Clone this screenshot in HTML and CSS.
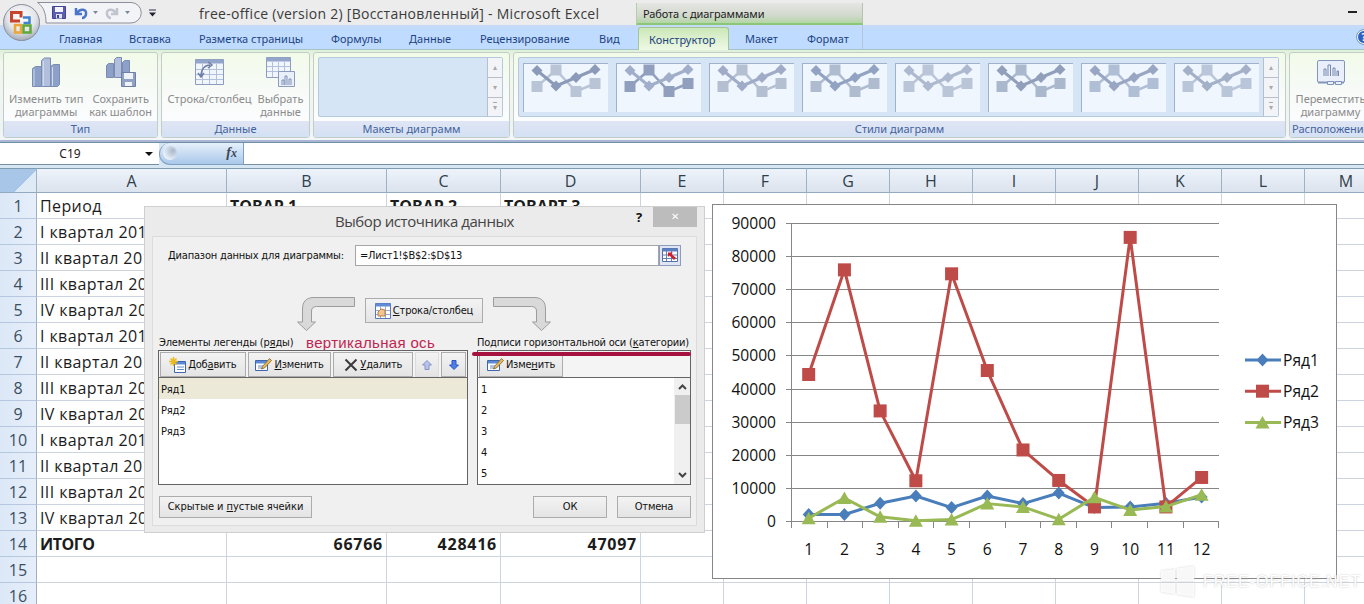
FILE: index.html
```html
<!DOCTYPE html>
<html lang="ru">
<head>
  <meta charset="UTF-8">
  <title>free-office (version 2) [Восстановленный] - Microsoft Excel</title>
  <link rel="stylesheet" href="styles.css">
</head>
<body>

  <header class="titlebar">
    <div class="quick">
      <svg width="105" height="22" viewBox="0 0 105 22">
        <path d="M.5 .5H94a10 10 0 0 1 0 20.500H9C9 12 7 5 .5 .5z" fill="#f3f4f8" stroke="#8b8f9b"/>
        <path d="M15.500 4.500h13v12h-13z" fill="#5b5fb0" stroke="#43468f"/>
        <path d="M18 5h8v5h-8z" fill="#f4f5fc"/>
        <path d="M19 12h6v4.500h-6z" fill="#dfe2f2"/>
        <path d="M20 13h2v3h-2z" fill="#43468f"/>
        <path d="M39 6v6h6M40 11c3-5 10-4 9 1 0 2-2 4-4 4" fill="none" stroke="#4a76c9" stroke-width="2.500"/>
        <path d="M56 9h5l-2.500 3zM88 9h5l-2.500 3z" fill="#7b8798"/>
        <path d="M80 6v6h-6M79 11c-3-5-10-4-9 1 0 2 2 4 4 4" fill="none" stroke="#bfc4cd" stroke-width="2.500"/>
      </svg>
      <svg width="9" height="8" viewBox="0 0 9 8"><path d="M1 1h7" stroke="#334" /><path d="M1 3.500h7l-3.500 4z" fill="#223"/></svg>
    </div>
    <div class="caption">free-office (version 2) [Восстановленный] - Microsoft Excel</div>
    <div class="context">Работа с диаграммами</div>
    <div class="minimize"></div>
  </header>

  <nav class="tabs">
    <span class="tab t-home">Главная</span>
    <span class="tab t-insert">Вставка</span>
    <span class="tab t-page">Разметка страницы</span>
    <span class="tab t-formulas">Формулы</span>
    <span class="tab t-data">Данные</span>
    <span class="tab t-review">Рецензирование</span>
    <span class="tab t-view">Вид</span>
    <span class="tab t-design active">Конструктор</span>
    <span class="tab t-layout">Макет</span>
    <span class="tab t-format">Формат</span>
    <span class="help">?</span>
  </nav>

  <svg class="orb" width="42" height="42" viewBox="0 0 42 42">
    <defs>
      <radialGradient id="orbFill" cx=".5" cy=".35" r=".65">
        <stop offset="0" stop-color="#fff"/>
        <stop offset=".6" stop-color="#e3e5ea"/>
        <stop offset="1" stop-color="#a4abb8"/>
      </radialGradient>
    </defs>
    <circle cx="20.500" cy="21.500" r="18" fill="url(#orbFill)" stroke="#868e9c"/>
    <g fill="none" stroke-width="3">
      <path d="M19 20h-8.500v-8.500h9.500v5" stroke="#c8432c"/>
      <path d="M22 16.500h6.500v5.500h-6" stroke="#3f83cf" stroke-width="2.500"/>
      <path d="M20 24h-6v7.500h6z" stroke="#eba53a" stroke-width="2.500"/>
      <path d="M22.500 24.500h7v7h-7z" stroke="#5fa83c" stroke-width="2.500"/>
    </g>
  </svg>

  <section class="ribbon">
    <div class="group g-type">
      <div class="tools">
        <div class="tool">
          <svg width="30" height="32" viewBox="0 0 30 32">
            <g stroke="#7b8cb2"><path d="M1.500 12.500l3-2h6v20h-9z" fill="#8da0c8"/><path d="M10.500 4.500l3-2.500h6v28.500h-9z" fill="#b1bfdc"/><path d="M19.500 10.500l3-2h6v20l-2 2h-7z" fill="#8da0c8"/></g>
            <path d="M3 13v17M12.500 5v25M21.500 11v19" stroke="#d0daed"/>
          </svg>
          <span>Изменить тип<br>диаграммы</span>
        </div>
        <div class="tool">
          <svg width="32" height="32" viewBox="0 0 32 32">
            <g stroke="#7b8cb2"><path d="M1.500 9.500l2-2h5v14h-7z" fill="#8da0c8"/><path d="M9.500 3.500l2-2h5v20h-7z" fill="#b1bfdc"/><path d="M17.500 6.500l2-2h5v15h-7z" fill="#8da0c8"/></g>
            <path d="M16.500 16.500h14v14h-14z" fill="#91a1c4" stroke="#6d7fa6"/>
            <path d="M19 17h9v6h-9zM20 26h7v4h-7z" fill="#eef2fa"/>
          </svg>
          <span>Сохранить<br>как шаблон</span>
        </div>
      </div>
      <div class="name">Тип</div>
    </div>

    <div class="group g-data">
      <div class="tools">
        <div class="tool">
          <svg width="32" height="32" viewBox="0 0 32 32">
            <path d="M1.500 3.500h28v25h-28z" fill="#f1f5fc" stroke="#8c9cbd"/>
            <path d="M1.500 3.500h28v4h-28z" fill="#93a5ca"/>
            <path d="M8.500 8v20M15.500 8v20M22.500 8v20M2 13.500h27M2 18.500h27M2 23.500h27" stroke="#b3c0d9"/>
            <path d="M7 20c0-7 4-11 9-11M4 17l3 4 3-4M14 6l4 3-4 3" fill="none" stroke="#6c7ea6" stroke-width="1.500"/>
          </svg>
          <span>Строка/столбец</span>
        </div>
        <div class="tool">
          <svg width="32" height="32" viewBox="0 0 32 32">
            <path d="M2.500 1.500h24v20h-24z" fill="#f1f5fc" stroke="#8c9cbd"/>
            <path d="M2.500 1.500h24v4h-24z" fill="#93a5ca"/>
            <path d="M8.500 6v15M14.500 6v15M20.500 6v15M3 10.500h23M3 15.500h23" stroke="#b3c0d9"/>
            <path d="M14.500 15.500h16v15h-16z" fill="#eaf0fa" stroke="#8c9cbd"/>
            <path d="M18 29v-5h2v5M21 29v-9h2v9M25 29v-6h2v6" fill="none" stroke="#7c8db4"/>
          </svg>
          <span>Выбрать<br>данные</span>
        </div>
      </div>
      <div class="name">Данные</div>
    </div>

    <div class="group g-layouts">
      <div class="gallery">
        <div class="thumbs"></div>
        <div class="spin"><i>▴</i><i>▾</i><i class="more">▾</i></div>
      </div>
      <div class="name">Макеты диаграмм</div>
    </div>

    <div class="group g-styles">
      <div class="gallery">
        <div class="thumbs" id="styles"></div>
        <div class="spin"><i>▴</i><i>▾</i><i class="more">▾</i></div>
      </div>
      <div class="name">Стили диаграмм</div>
    </div>

    <div class="group g-place">
      <div class="tools">
        <div class="tool">
          <svg width="32" height="32" viewBox="0 0 32 32">
            <rect x="2.500" y="4.500" width="27" height="22" rx="1.500" fill="#eaf0fb" stroke="#8394ba"/>
            <path d="M3 26.500h26" stroke="#8394ba" stroke-width="2"/>
            <path d="M9 20v-7h2v7M13 20V9h2.500v11M18 20v-8h2v8M22 20v-5h1.500v5" fill="none" stroke="#7686ae"/>
            <path d="M12.500 25.500h6v3h-6zM20.500 25.500h6v3h-6z" fill="#eaf0fb" stroke="#8394ba"/>
          </svg>
          <span>Переместить<br>диаграмму</span>
        </div>
      </div>
      <div class="name">Расположение</div>
    </div>
  </section>

  <div class="formula">
    <div class="namebox"><span>C19</span><i></i></div>
    <div class="fx"><b></b><em>f<small>x</small></em></div>
    <div class="entry"></div>
  </div>

  <main class="sheet" id="sheet"></main>

  <div class="chart">
    <svg id="chart" width="623" height="373" viewBox="713 205 623 373"></svg>
  </div>

  <div class="dialog">
    <div class="dlg-title">
      <span class="dlg-name">Выбор источника данных</span>
      <span class="dlg-help">?</span>
      <span class="dlg-close">✕</span>
    </div>
    <div class="dlg-body">
      <div class="range">
        <label><u>Д</u>иапазон данных для диаграммы:</label>
        <div class="field">=Лист1!$B$2:$D$13</div>
        <div class="pick">
          <svg width="16" height="14" viewBox="0 0 16 14">
            <path d="M.5 .5h15v13H.5z" fill="#fff" stroke="#5572a8"/>
            <path d="M.5 .5h15v3H.5z" fill="#5b7fc0"/>
            <path d="M4.500 3v10M9.500 3v10M1 7h14M1 10.500h14" stroke="#6a7fa8"/>
            <path d="M6 4.500h5l-1.500 1.500 4.500 4-2 2-4.500-4.500L6 9z" fill="#d0202c"/>
          </svg>
        </div>
      </div>

      <div class="swap">
        <svg width="58" height="35" viewBox="0 0 58 35">
          <path d="M57.500 1.500H17C8 1.500 5.500 7 5.500 13v13H.5l9 8.500 9-8.500h-4V15c0-3 2-4.500 5-4.500h38z" fill="#d9d9d9" stroke="#9c9c9c"/>
        </svg>
        <div class="btn switch">
          <svg width="16" height="16" viewBox="0 0 16 16">
            <path d="M.5 .5h15v15H.5z" fill="#fff" stroke="#5877b5"/>
            <path d="M.5 .5h15v3H.5z" fill="#5f8bd8"/>
            <path d="M5.500 3v12M10.500 3v12M1 7.500h14M1 11.500h14" stroke="#93abd6"/>
            <path d="M3 13V9l3-3 4 1v6z" fill="#f2c48f" stroke="#b77f42"/>
          </svg>
          <span><u>С</u>трока/столбец</span>
        </div>
        <svg width="58" height="35" viewBox="0 0 58 35">
          <path d="M.5 1.500H41c9 0 11.500 5.500 11.500 11.500v13h5l-9 8.500-9-8.500h4V15c0-3-2-4.500-5-4.500H.5z" fill="#d9d9d9" stroke="#9c9c9c"/>
        </svg>
      </div>

      <div class="heads">
        <span class="h-rows">Элементы легенды (р<u>я</u>ды)</span>
        <span class="note">вертикальная ось</span>
        <span class="h-cats">Подписи горизонтальной оси (<u>к</u>атегории)</span>
      </div>

      <div class="lists">
        <div class="list rows">
          <div class="bar">
            <div class="btn add">
              <svg width="17" height="16" viewBox="0 0 17 16">
                <path d="M5.500 4.500h11v11h-11z" fill="#fff" stroke="#3f66b0"/>
                <path d="M6 5h10v2.500H6z" fill="#5b8ad6"/>
                <path d="M8 10h7M8 12.500h7" stroke="#6c8cc4"/>
                <path d="M4.500 0v9M0 4.500h9M1.500 1.500l6 6M7.500 1.500l-6 6" stroke="#e9b91f" stroke-width="1.500"/>
              </svg>
              <span>Доб<u>а</u>вить</span>
            </div>
            <div class="btn edit">
              <svg width="17" height="16" viewBox="0 0 17 16">
                <path d="M.5 3.500h12v10H.5z" fill="#fff" stroke="#3f66b0"/>
                <path d="M1 4h11v2.500H1z" fill="#5b8ad6"/>
                <path d="M3 9h6M3 11h5" stroke="#6c8cc4"/>
                <path d="M7.500 9.500l7-8 2 2-7 7.500-3 1z" fill="#e8bb55" stroke="#7e6130" stroke-width=".8"/>
              </svg>
              <span><u>И</u>зменить</span>
            </div>
            <div class="btn del">
              <svg width="14" height="14" viewBox="0 0 14 14"><path d="M1.500 1.500l11 11M12.500 1.500l-11 11" stroke="#3b3b3b" stroke-width="2"/></svg>
              <span><u>У</u>далить</span>
            </div>
            <div class="btn arrow off">
              <svg width="10" height="10" viewBox="0 0 10 10"><path d="M5 .5l4.500 4.500H7v4.500H3V5H.5z" fill="#b7c3ea" stroke="#8592c8"/></svg>
            </div>
            <div class="btn arrow">
              <svg width="10" height="10" viewBox="0 0 10 10"><path d="M5 9.500L.5 5H3V.5h4V5h2.500z" fill="#4f7fe6" stroke="#2b57bd"/></svg>
            </div>
          </div>
          <div class="item selected">Ряд1</div>
          <div class="item">Ряд2</div>
          <div class="item">Ряд3</div>
        </div>

        <div class="list cats">
          <div class="bar">
            <div class="btn edit">
              <svg width="17" height="16" viewBox="0 0 17 16">
                <path d="M.5 3.500h12v10H.5z" fill="#fff" stroke="#3f66b0"/>
                <path d="M1 4h11v2.500H1z" fill="#5b8ad6"/>
                <path d="M3 9h6M3 11h5" stroke="#6c8cc4"/>
                <path d="M7.500 9.500l7-8 2 2-7 7.500-3 1z" fill="#e8bb55" stroke="#7e6130" stroke-width=".8"/>
              </svg>
              <span>Изме<u>н</u>ить</span>
            </div>
          </div>
          <div class="scroller">
            <div class="items">
              <div class="item">1</div>
              <div class="item">2</div>
              <div class="item">3</div>
              <div class="item">4</div>
              <div class="item">5</div>
            </div>
            <div class="scrollbar">
              <svg width="9" height="6" viewBox="0 0 9 6"><path d="M1 5l3.500-3.500L8 5" fill="none" stroke="#444" stroke-width="2"/></svg>
              <div class="thumb"></div>
              <svg width="9" height="6" viewBox="0 0 9 6"><path d="M1 1l3.500 3.500L8 1" fill="none" stroke="#444" stroke-width="2"/></svg>
            </div>
          </div>
          <div class="underline"></div>
        </div>
      </div>

      <div class="actions">
        <div class="btn hidden-cells"><span>Скрытые и <u>п</u>устые ячейки</span></div>
        <div class="btn ok">ОК</div>
        <div class="btn cancel">Отмена</div>
      </div>
    </div>
  </div>

  <div class="watermark">
    <svg width="33" height="31" viewBox="0 0 33 31"><path d="M0 5l14-2v12H0zM16 2.500L33 0v15H16zM0 17h14v11L0 26zM16 17h17v14l-17-2.500z" fill="#fff" fill-opacity=".85"/></svg>
    <span>FREE-OFFICE.NET</span>
  </div>

  <script src="script.js"></script>
</body>
</html>
```
FILE: styles.css
```css
* {
  box-sizing: border-box;
}

body {
  margin: 0;
  width: 1364px;
  height: 604px;
  overflow: hidden;
  position: relative;
  background: #fff;
  font-family: "Noto Sans", "Open Sans", sans-serif;
  color: #1c1c1c;
  white-space: nowrap;
}

svg {
  display: block;
  flex: none;
}

/* title bar */

.titlebar {
  display: flex;
  height: 25px;
  background: #ececec;
}

.quick {
  display: flex;
  width: 199px;
  padding: 2px 0 0 37px;
  gap: 6px;
}

.quick svg + svg {
  margin-top: 7px;
}

.caption {
  width: 437px;
  font: 14px/28px "Open Sans", sans-serif;
  letter-spacing: .26px;
  color: #3b3b3b;
}

.context {
  width: 227px;
  margin-top: 3px;
  padding-left: 6px;
  border-left: 1px solid #b4cfa8;
  border-right: 1px solid #b9bfb4;
  border-bottom: 2px solid #8ac776;
  background: linear-gradient(#e4e6e2, #d3d9cf 60%, #b4d6a6);
  font-size: 11px;
  line-height: 22px;
  letter-spacing: -.1px;
}

.minimize {
  width: 9px;
  height: 2px;
  margin: 11px 7px 0 auto;
  background: #222;
}

/* tabs */

.tabs {
  display: flex;
  height: 25px;
  background: linear-gradient(#c8d9f5, #bfdbff 5px);
  border-bottom: 1px solid #a5c3cf;
  font-size: 11px;
  line-height: 28px;
  color: #1d4380;
}

.tab {
  flex: none;
}

.t-home { width: 70px; margin-left: 59px; }
.t-insert { width: 70px; }
.t-page { width: 132px; }
.t-formulas { width: 78px; }
.t-data { width: 71px; }
.t-review { width: 119px; }
.t-view { width: 39px; }
.t-design { width: 91px; padding-left: 10px; }
.t-layout { width: 62px; margin-left: 16px; }
.t-format { width: 56px; border-right: 1px solid #b3c6de; }

.tab.active {
  height: 23px;
  margin-top: 2px;
  line-height: 23px;
  border: 1px solid #a3c692;
  border-bottom: 0;
  border-radius: 3px 3px 0 0;
  background: linear-gradient(#cbe8b8, #eff9e6);
}

.help {
  flex: none;
  width: 14px;
  height: 14px;
  margin: 5px 0 0 494px;
  border-radius: 50%;
  border: 1px solid #fff;
  background: #2f62c0;
  outline: 1px solid #7d9bcc;
  color: #fff;
  font-weight: bold;
  font-size: 10px;
  line-height: 12px;
  text-align: center;
}

.orb {
  position: absolute;
  left: 1px;
  top: 1px;
}

/* ribbon */

.ribbon {
  display: flex;
  gap: 3px;
  height: 92px;
  padding: 2px 0 2px 3px;
  background: linear-gradient(#dff0d8, #f2f8ec 12px, #eef3f6 80px, #f3f6f8 88px);
  border-bottom: 2px solid #aab6d3;
  font-size: 11px;
}

.group {
  flex: none;
  display: flex;
  flex-direction: column;
  border: 1px solid #c3cdc8;
  border-radius: 3px;
  background: linear-gradient(#f2fbe9, #f6faf5 30px, #fbfcfe 65px);
  overflow: hidden;
}

.g-type { width: 155px; }
.g-data { width: 149px; }
.g-layouts { width: 197px; }
.g-styles { width: 773px; }
.g-place { width: 82px; }

.tools {
  display: flex;
  flex: 1;
  justify-content: space-around;
  color: #8b8b8b;
  line-height: 13px;
  text-align: center;
}

.tool {
  display: flex;
  flex-direction: column;
  align-items: center;
  padding-top: 3px;
  gap: 4px;
}

.g-type .tools,
.g-data .tools {
  justify-content: center;
  gap: 6px;
}

.g-place .tool {
  margin-left: 1px;
}

.name {
  flex: none;
  height: 16px;
  line-height: 15px;
  text-align: center;
  color: #44629c;
  background: linear-gradient(#e0e5f4, #d3e1f4);
}

.g-place .name {
  text-align: left;
  padding-left: 2px;
}

.gallery {
  display: flex;
  width: calc(100% - 10px);
  height: 60px;
  margin: 4px 0 4px 4px;
  border: 1px solid #b6c8dc;
  border-radius: 2px;
  background: #d5e5f6;
}

.thumbs {
  flex: 1;
  display: flex;
  gap: 8px;
  padding: 5px 0 0 4px;
}

.thumbs svg {
  border-left: 1px solid #a1b1cc;
  border-top: 1px solid #a1b1cc;
  background: #eff6fe;
}

.spin {
  width: 15px;
  display: flex;
  flex-direction: column;
  background: #f3f4f7;
}

.spin i {
  flex: 1;
  border-left: 1px solid #b9bec8;
  border-bottom: 1px solid #b9bec8;
  font: normal 8px/19px "DejaVu Sans", sans-serif;
  text-align: center;
  color: #a8a8a8;
}

.spin .more {
  border-bottom: 0;
  text-decoration: overline;
}

/* formula bar */

.formula {
  display: flex;
  height: 26px;
  border-top: 1px solid #6f8fa8;
  background: #d6e6f2;
}

.namebox {
  display: flex;
  align-items: center;
  width: 159px;
  height: 22px;
  background: #fff;
  border-bottom: 1px solid #7590a2;
  font-size: 12px;
}

.namebox span {
  width: 140px;
  text-align: center;
}

.namebox i {
  margin-left: 5px;
  border: 4px solid transparent;
  border-top-color: #111;
  border-bottom: 0;
}

.fx {
  display: flex;
  width: 85px;
  height: 22px;
  justify-content: space-between;
  padding-right: 6px;
  border: 1px solid #7fa0c0;
  border-top: 0;
  border-radius: 11px 0 0 11px;
  background: linear-gradient(#e6f0fb, #a9c8ea);
}

.fx b {
  width: 14px;
  height: 14px;
  margin: 3px;
  border-radius: 50%;
  background: radial-gradient(circle at 70% 35%, #a8b8ca, #e8f0f9 70%);
}

.fx em {
  font: italic bold 14px/20px "Liberation Serif", serif;
  color: #3c4654;
}

.fx small {
  font-size: 12px;
}

.entry {
  flex: 1;
  height: 22px;
  background: #fff;
  border-bottom: 1px solid #7590a2;
}

/* sheet */

.sheet {
  display: grid;
  grid-template-columns: 37px 190px 160px 114px 140px repeat(9, 83px);
  grid-template-rows: 25px;
  grid-auto-rows: 26px;
  font: 16px/26px "Open Sans", "Noto Sans", sans-serif;
}

.cell {
  border-right: 1px solid #ccd5dd;
  border-bottom: 1px solid #ccd5dd;
  padding: 0 3px;
  overflow: hidden;
  letter-spacing: .4px;
}

.cell.bold {
  font-weight: bold;
  letter-spacing: 0;
}

.cell.total {
  letter-spacing: -.5px;
}

.cell.number {
  text-align: right;
  letter-spacing: .75px;
}

.col-head {
  height: 25px;
  line-height: 24px;
  text-align: center;
  color: #2f3f4c;
  border-top: 1px solid #7f9db2;
  border-right: 1px solid #9fb2c4;
  border-bottom: 1px solid #93a9bf;
  background: linear-gradient(#eef3fa, #dbe3ee);
}

.row-head {
  text-align: center;
  color: #3c4f60;
  border-right: 1px solid #9fb2c4;
  border-bottom: 1px solid #b5c8e0;
  background: linear-gradient(90deg, #dce8f7, #e6eefa);
}

.corner {
  background: linear-gradient(135deg, #a8c6e8 63%, #dfeaf7 63%);
  border-top: 1px solid #7f9db2;
  border-right: 1px solid #9fb2c4;
  border-bottom: 1px solid #93a9bf;
}

/* chart over the cells */

.chart {
  position: absolute;
  left: 712px;
  top: 204px;
  width: 625px;
  height: 375px;
  border: 1px solid #868686;
  background: #fff;
}

.chart text {
  font: 15.600px "Open Sans", "Noto Sans", sans-serif;
  fill: #111;
}

.grid-line {
  stroke: #868686;
  fill: none;
}

.s1 { stroke: #4a7ebb; fill: #4a7ebb; }
.s2 { stroke: #be4b48; fill: #be4b48; }
.s3 { stroke: #98b954; fill: #98b954; }

.line {
  fill: none;
  stroke-width: 3;
  stroke-linejoin: round;
}

.mark {
  stroke: none;
}

/* dialog */

.dialog {
  position: absolute;
  left: 144px;
  top: 206px;
  width: 561px;
  height: 327px;
  padding: 0 7px;
  border: 1px solid #cfcfcf;
  background: #ebebeb;
  font: 11px/14px "DejaVu Sans Condensed", "DejaVu Sans", sans-serif;
  letter-spacing: -.19px;
  color: #111;
}

.dlg-title {
  display: flex;
  height: 29px;
}

.dlg-name {
  width: 484px;
  padding-left: 183px;
  font: 15px/29px "Open Sans", sans-serif;
  letter-spacing: -.43px;
  color: #444;
}

.dlg-help {
  width: 17px;
  font: bold 13px/21px "Open Sans", sans-serif;
}

.dlg-close {
  width: 44px;
  height: 20px;
  background: #bcbcbc;
  color: #fff;
  font: 10px/20px "DejaVu Sans", sans-serif;
  text-align: center;
}

.dlg-body {
  height: 290px;
  padding: 7px 5px 0 5px;
  border: 1px solid #dcdcdc;
  background: #f0f0f0;
}

.range {
  display: flex;
  align-items: center;
  height: 22px;
}

.range label {
  width: 197px;
  padding: 1px 0 0 10px;
}

.field {
  width: 304px;
  height: 21px;
  padding-left: 4px;
  border: 1px solid #a5a5a5;
  background: #fff;
  line-height: 20px;
}

.pick {
  width: 22px;
  height: 21px;
  padding: 2px;
  border: 1px solid #8e9cbd;
  background: #dfe5f3;
}

.swap {
  display: flex;
  justify-content: center;
  gap: 10px;
  margin: 30px 1px 0 0;
}

.btn {
  display: flex;
  align-items: center;
  justify-content: center;
  border: 1px solid #acacac;
  background: linear-gradient(#f3f3f3, #e4e4e4);
}

.switch {
  width: 118px;
  height: 25px;
  margin-top: 2px;
  gap: 2px;
}

.heads {
  display: flex;
  height: 18px;
  margin-top: 3px;
  align-items: center;
}

.h-rows {
  width: 148px;
  padding-left: 1px;
}

.note {
  width: 171px;
  font: 15px/16px "Liberation Sans", sans-serif;
  letter-spacing: .33px;
  color: #c02550;
}

.lists {
  display: flex;
  gap: 9px;
  margin-top: -2px;
}

.list {
  position: relative;
  height: 135px;
  border: 1px solid #646464;
  background: #fff;
}

.rows { width: 310px; }
.cats { width: 214px; }

.bar {
  display: flex;
  gap: 2px;
  height: 27px;
  padding: 1px;
  background: #f4f4f4;
  border-bottom: 1px solid #646464;
}

.bar .btn {
  height: 25px;
  gap: 2px;
}

.add { width: 86px; }
.edit { width: 84px; }
.del { width: 80px; }
.arrow { width: 25px; }

.arrow.off {
  width: 24px;
  border-color: #dcdcdc;
}

.item {
  height: 21px;
  padding-left: 2px;
  line-height: 23px;
}

.cats .item {
  padding-left: 3px;
}

.selected {
  background: #ece9d8;
}

.scroller {
  display: flex;
  justify-content: space-between;
  height: 106px;
}

.scrollbar {
  display: flex;
  flex-direction: column;
  align-items: center;
  width: 16px;
  padding: 6px 0;
  background: #f0f0f0;
}

.thumb {
  width: 15px;
  height: 29px;
  margin: 5px 0 auto;
  background: #cbcbcb;
}

/* hand-drawn emphasis across the top of the categories list */
.underline {
  position: absolute;
  left: -6px;
  top: 1px;
  width: 219px;
  height: 4px;
  border-radius: 2px;
  background: #a5123f;
}

.actions {
  display: flex;
  margin: 11px 0 0 1px;
}

.actions .btn {
  height: 22px;
}

.hidden-cells { width: 153px; letter-spacing: -.05px; }
.ok { width: 74px; margin: 0 10px 0 221px; }
.cancel { width: 74px; }

.watermark {
  position: absolute;
  left: 1161px;
  top: 566px;
  display: flex;
  align-items: center;
  gap: 9px;
  color: #fff;
  font: 16px "Liberation Sans", sans-serif;
  letter-spacing: 1px;
  text-shadow: 0 0 2px #bbb;
}

.watermark svg {
  filter: drop-shadow(0 0 1px #ccc);
}
```
FILE: script.js
```js
// cells
const cells = {
  A1: 'Период', B1: 'ТОВАР 1', C1: 'ТОВАР 2', D1: 'ТОВАРТ 3',
  A14: 'ИТОГО', B14: '66766', C14: '428416', D14: '47097'
};
const quarters = ['I', 'II', 'III', 'IV'];
for (let i = 0; i < 12; i++) {
  cells['A' + (i + 2)] = quarters[i % 4] + ' квартал ' + (2012 + Math.floor(i / 4));
}

const letters = 'ABCDEFGHIJKLM'.split('');
let html = '<div class="corner"></div>';
letters.forEach(l => html += `<div class="col-head">${l}</div>`);

for (let r = 1; r <= 16; r++) {
  html += `<div class="row-head">${r}</div>`;
  letters.forEach(l => {
    const text = cells[l + r] || '';
    let cls = 'cell';
    if (r === 14 || (r === 1 && l !== 'A')) cls += ' bold';
    if (r === 14) cls += l === 'A' ? ' total' : ' number';
    html += `<div class="${cls}">${text}</div>`;
  });
}
document.getElementById('sheet').innerHTML = html;

// style gallery: [diamond line, square line]
const styles = [
  ['#8b9ab8', '#b9c5d6'], ['#a1aeca', '#919fbe'], ['#9fabc7', '#b4c0d2'], ['#92a2c2', '#afbcd0'],
  ['#adb9ce', '#bac6d8'], ['#929fbb', '#a9b8cd'], ['#98a5c3', '#b0bfd5'], ['#a3b0c8', '#b9c6d9']
];
const diamonds = [[13, 6.5], [32, 22], [52, 13.5], [71, 5.5]];
const squares = [[13, 22.5], [32, 6], [52, 27.5], [71, 19.5]];

document.getElementById('styles').innerHTML = styles.map(([a, b]) => {
  let s = '<svg width="85" height="49" viewBox="0 0 84 48">';
  s += `<polyline points="${squares.join(' ')}" fill="none" stroke="${b}" stroke-width="2.500"/>`;
  s += `<polyline points="${diamonds.join(' ')}" fill="none" stroke="${a}" stroke-width="3"/>`;
  squares.forEach(([x, y]) => s += `<rect x="${x - 5.5}" y="${y - 5.5}" width="11" height="11" fill="${b}"/>`);
  diamonds.forEach(([x, y]) => s += `<path d="M${x} ${y - 5.5}l5.500 5.500-5.500 5.500-5.500-5.500z" fill="${a}"/>`);
  return s + '</svg>';
}).join('');

// chart
const series = [
  [2100, 2100, 5500, 7700, 4200, 7700, 5400, 8600, 4200, 4400, 5500, 7400],
  [44400, 76000, 33400, 12300, 74800, 45600, 21600, 12400, 4400, 85800, 4400, 13300],
  [1000, 7100, 1400, 200, 600, 5400, 4400, 700, 7300, 3500, 4500, 8100]
];
const px = i => 808.7 + 35.72 * i;
const py = v => 521.5 - v * 298 / 90000;

function marker(k, x, y) {
  if (k === 0) return `<path class="mark s1" d="M${x} ${y - 6.5}l6 6.500-6 6.500-6-6.500z"/>`;
  if (k === 1) return `<rect class="mark s2" x="${x - 6.5}" y="${y - 6.5}" width="13" height="13"/>`;
  return `<path class="mark s3" d="M${x} ${y - 6.5}l7 12.500h-14z"/>`;
}

let g = '';
for (let v = 0; v <= 90000; v += 10000) {
  const y = Math.floor(py(v)) + 0.5;
  g += `<path class="grid-line" d="M786 ${y}H1219"/>`;
  g += `<text x="776" y="${y + 5.5}" text-anchor="end">${v}</text>`;
}
g += '<path class="grid-line" d="M791.5 223V528"/>';
for (let i = 1; i <= 12; i++) {
  const x = Math.floor(791.5 + 35.6 * i) + 0.5;
  g += `<path class="grid-line" d="M${x} 521V528"/>`;
  g += `<text x="${px(i - 1)}" y="555" text-anchor="middle">${i}</text>`;
}
series.forEach((values, k) => {
  g += `<polyline class="line s${k + 1}" points="${values.map((v, i) => px(i) + ',' + py(v)).join(' ')}"/>`;
  values.forEach((v, i) => g += marker(k, px(i), py(v)));
});
['Ряд1', 'Ряд2', 'Ряд3'].forEach((name, k) => {
  const y = 360 + k * 31.2;
  g += `<path class="line s${k + 1}" d="M1245 ${y}h36"/>` + marker(k, 1262.5, y);
  g += `<text x="1283" y="${y + 5.5}" textLength="36">${name}</text>`;
});
document.getElementById('chart').innerHTML = g;
```
